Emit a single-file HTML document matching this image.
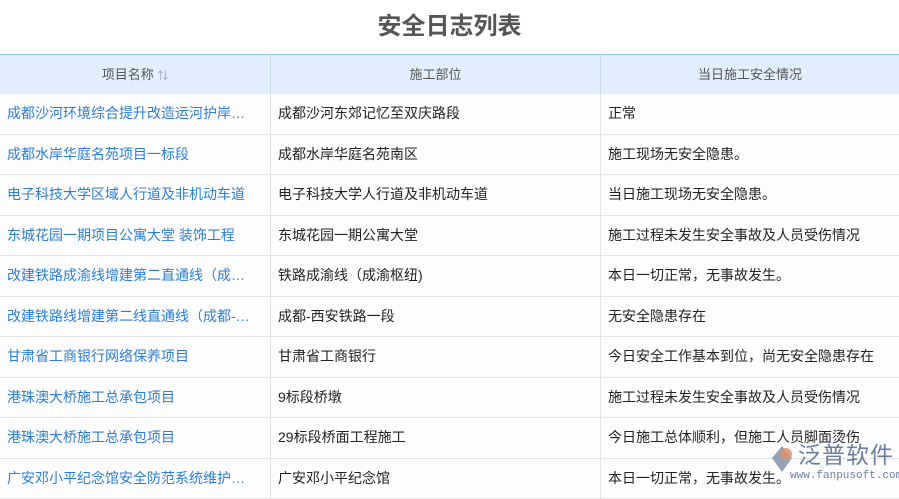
<!DOCTYPE html>
<html><head><meta charset="utf-8"><style>
body{margin:0;width:899px;height:489px;overflow:hidden;background:#fff;font-family:"Liberation Sans","Noto Sans CJK SC",sans-serif;position:relative}
.t{position:absolute;top:10px;left:0;width:899px;text-align:center;font-size:24px;font-weight:bold;color:#555;line-height:34px}
.h{position:absolute;top:54px;left:0;width:899px;height:39px;background:#e1eefb;border-top:1px solid #8fc1ea;border-bottom:1px solid #c7dcef}
.h div{position:absolute;top:0;height:39px;line-height:39px;text-align:center;font-size:13px;color:#555;border-right:1px solid #c7dcef;box-sizing:border-box}
.r{position:absolute;left:0;width:899px;height:40.5px;border-bottom:1px solid #e4e4e4;box-sizing:border-box;background:#fdfdfe}
.r div{position:absolute;top:0;height:100%;line-height:38px;font-size:14px;color:#222;padding-left:7px;box-sizing:border-box;border-right:1px solid #e4e4e4;white-space:nowrap;overflow:hidden;text-overflow:ellipsis}
.c1{left:0;width:271px}.c2{left:271px;width:330px}.c3{left:601px;width:298px;border-right:none!important}
.r .c1{color:#2a7fd4;padding-right:20px}
.wm{position:absolute;left:768px;top:440px;}
</style></head><body>
<div class="t">安全日志列表</div>
<div class="h"><div class="c1">项目名称 <span style="color:#9ab;font-size:11px">⇅</span></div><div class="c2">施工部位</div><div class="c3">当日施工安全情况</div></div>
<div class="r" style="top:94px"><div class="c1">成都沙河环境综合提升改造运河护岸工程</div><div class="c2">成都沙河东郊记忆至双庆路段</div><div class="c3">正常</div></div>
<div class="r" style="top:134.5px"><div class="c1">成都水岸华庭名苑项目一标段</div><div class="c2">成都水岸华庭名苑南区</div><div class="c3">施工现场无安全隐患。</div></div>
<div class="r" style="top:175px"><div class="c1">电子科技大学区域人行道及非机动车道</div><div class="c2">电子科技大学人行道及非机动车道</div><div class="c3">当日施工现场无安全隐患。</div></div>
<div class="r" style="top:215.5px"><div class="c1">东城花园一期项目公寓大堂 装饰工程</div><div class="c2">东城花园一期公寓大堂</div><div class="c3">施工过程未发生安全事故及人员受伤情况</div></div>
<div class="r" style="top:256px"><div class="c1">改建铁路成渝线增建第二直通线（成渝枢纽）</div><div class="c2">铁路成渝线（成渝枢纽)</div><div class="c3">本日一切正常，无事故发生。</div></div>
<div class="r" style="top:296.5px"><div class="c1">改建铁路线增建第二线直通线（成都-西安）</div><div class="c2">成都-西安铁路一段</div><div class="c3">无安全隐患存在</div></div>
<div class="r" style="top:337px"><div class="c1">甘肃省工商银行网络保养项目</div><div class="c2">甘肃省工商银行</div><div class="c3">今日安全工作基本到位，尚无安全隐患存在</div></div>
<div class="r" style="top:377.5px"><div class="c1">港珠澳大桥施工总承包项目</div><div class="c2">9标段桥墩</div><div class="c3">施工过程未发生安全事故及人员受伤情况</div></div>
<div class="r" style="top:418px"><div class="c1">港珠澳大桥施工总承包项目</div><div class="c2">29标段桥面工程施工</div><div class="c3">今日施工总体顺利，但施工人员脚面烫伤</div></div>
<div class="r" style="top:458.5px"><div class="c1">广安邓小平纪念馆安全防范系统维护工程</div><div class="c2">广安邓小平纪念馆</div><div class="c3">本日一切正常，无事故发生。</div></div>
<div class="wm">
<svg width="28" height="30" style="position:absolute;left:0;top:4px"><path d="M14 2 L4 14 L14 28 L24 14Z" fill="#7a8aa6" opacity=".8"/><circle cx="18" cy="10" r="6" fill="#e0926a" opacity=".85"/></svg>
<div style="position:absolute;left:30px;top:0;font-size:23px;color:#6a7fa0;letter-spacing:1px;white-space:nowrap;line-height:30px">泛普软件</div>
<div style="position:absolute;left:22px;top:30px;font-size:11px;color:#6a7fa0;white-space:nowrap;font-family:'Liberation Mono',monospace">www.fanpusoft.com</div>
</div>
</body></html>
